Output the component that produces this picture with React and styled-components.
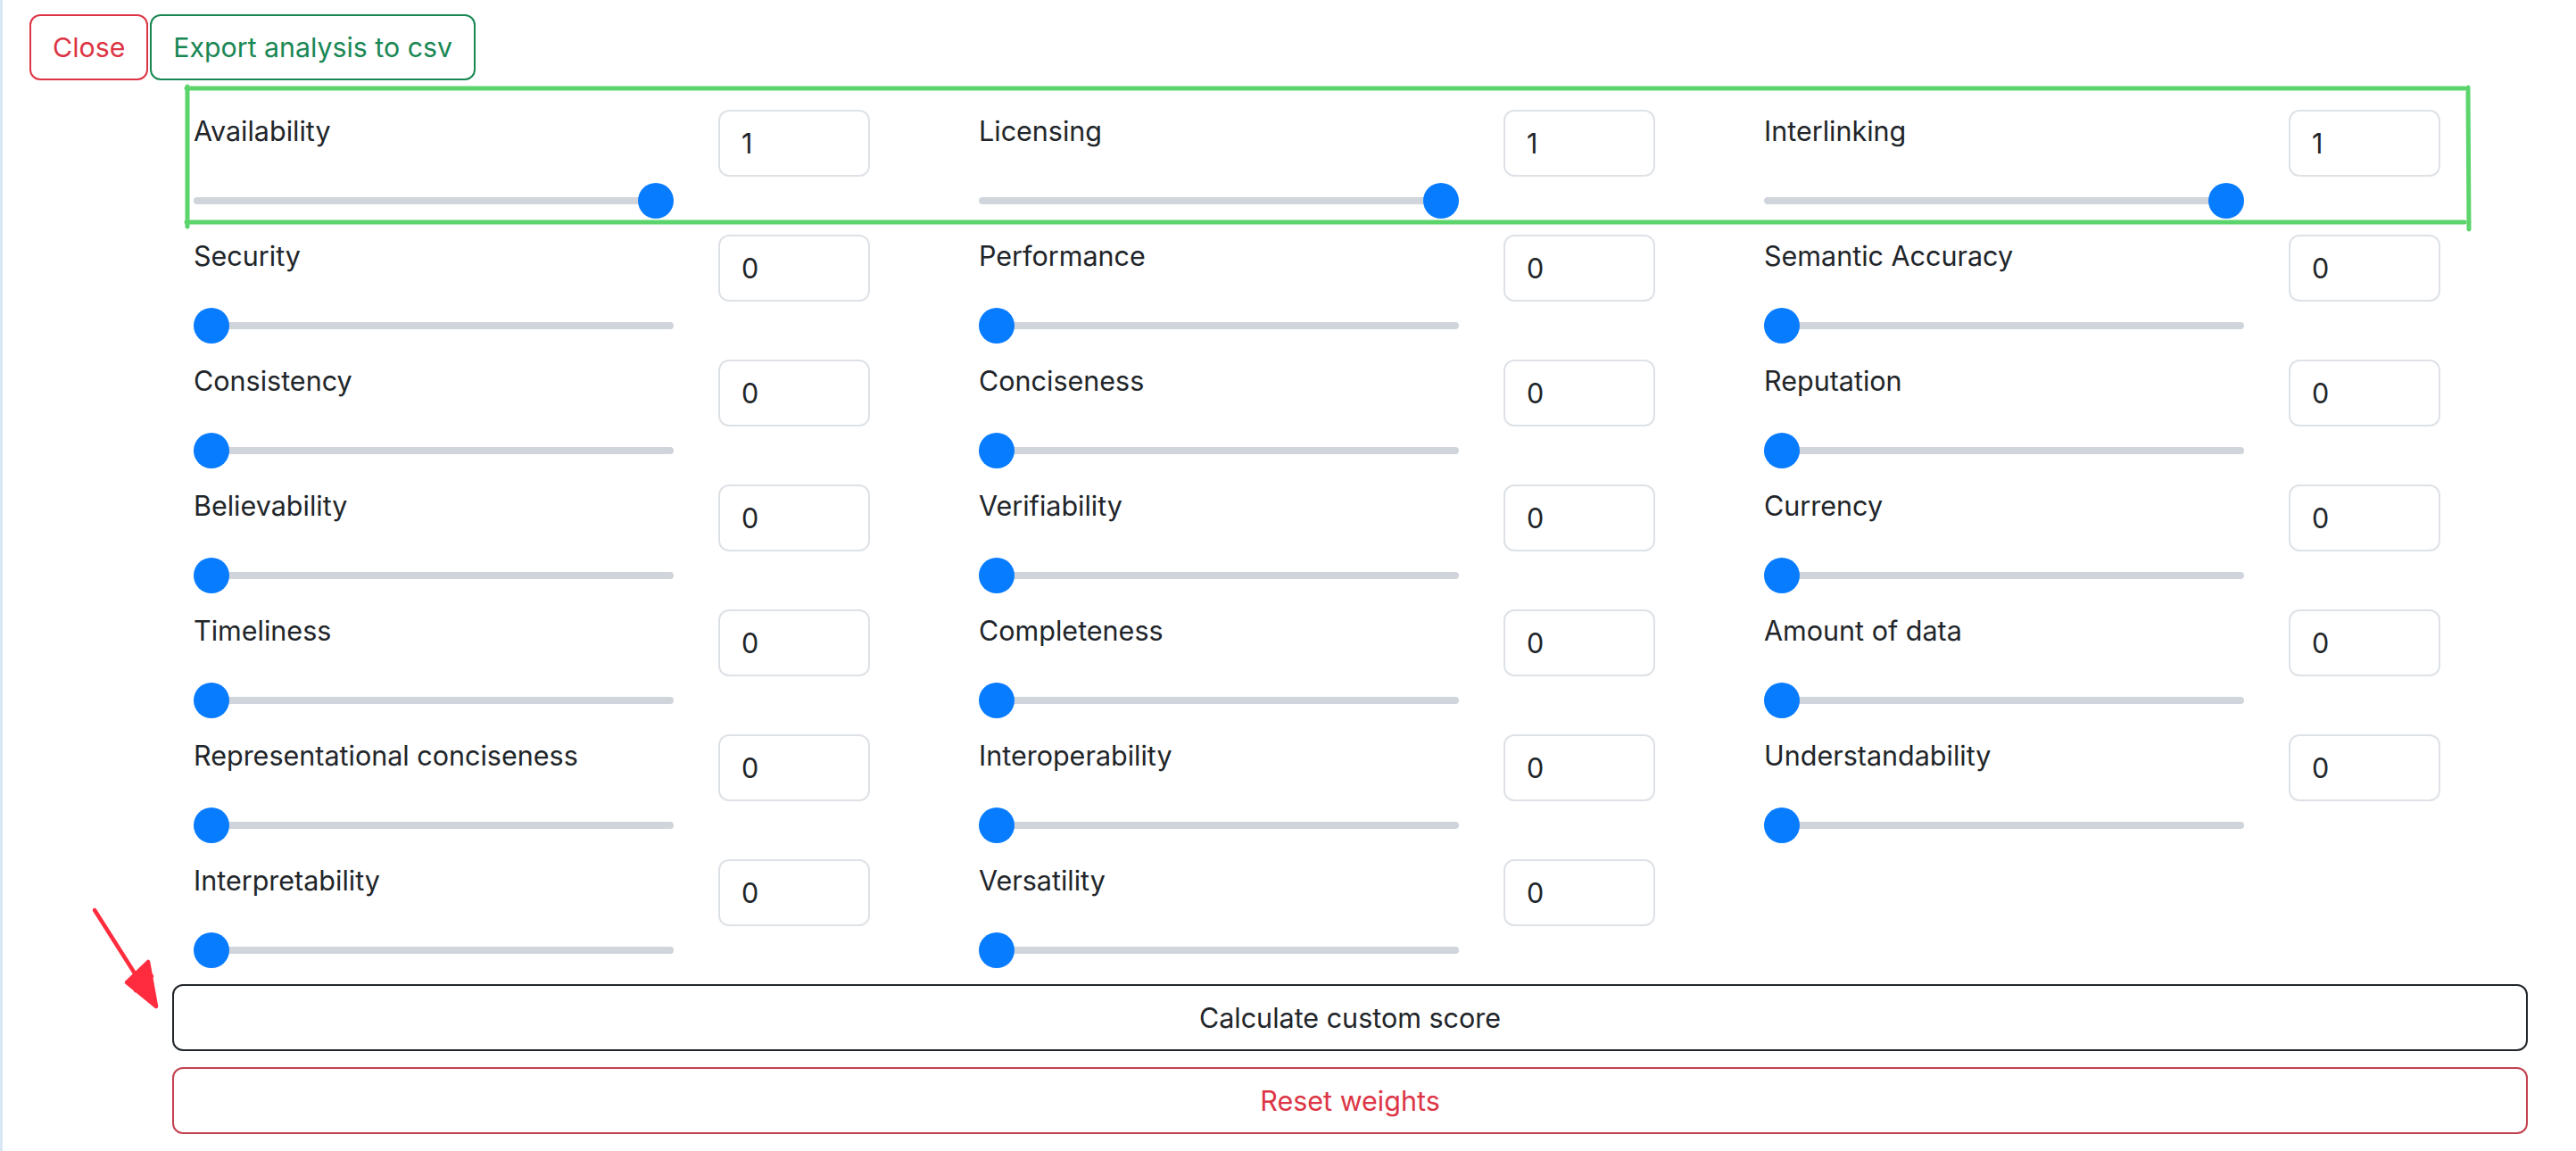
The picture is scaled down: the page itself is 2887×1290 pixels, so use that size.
import React, { useState } from "react";
import styled, { createGlobalStyle } from "styled-components";

const GlobalStyle = createGlobalStyle`
  * { box-sizing: border-box; }
  html, body {
    margin: 0;
    padding: 0;
    background: #fff;
  }
  body {
    font-family: Inter, "Liberation Sans", Arial, sans-serif;
    color: #212529;
  }
`;

const Root = styled.div`
  position: relative;
  width: 2887px;
  min-height: 1290px;
  overflow: hidden;
`;

const Page = styled.div`
  min-height: 1290px;
  border-left: 3px solid #d9e6f5;
  padding: 16px 0 0 30px;
`;

const Toolbar = styled.div`
  display: flex;
  gap: 2px;
`;

const OutlineButton = styled.button`
  height: 74px;
  padding: 0 24px;
  border: 2px solid ${({ $color }) => $color};
  border-radius: 12px;
  background: #fff;
  color: ${({ $color }) => $color};
  font-family: inherit;
  font-size: 30.3px;
  cursor: pointer;
`;

const Content = styled.div`
  width: 2640px;
  margin: 33px 0 0 160px;
`;

const Grid = styled.div`
  display: grid;
  grid-template-columns: repeat(3, 880px);
  grid-auto-rows: 140px;
`;

const Cell = styled.div`
  display: flex;
  align-items: flex-start;
  padding-left: 24px;
`;

const Control = styled.div`
  display: flex;
  flex-direction: column;
  width: 538px;
`;

const Label = styled.label`
  height: 50px;
  font-size: 30.5px;
  line-height: 48px;
  white-space: nowrap;
`;

const Range = styled.input.attrs({ type: "range" })`
  -webkit-appearance: none;
  appearance: none;
  width: 538px;
  height: 40px;
  margin: 32px 0 0;
  padding: 0;
  background: transparent;
  cursor: pointer;

  &::-webkit-slider-runnable-track {
    height: 8px;
    border-radius: 4px;
    background: #d0d5db;
  }

  &::-webkit-slider-thumb {
    -webkit-appearance: none;
    width: 40px;
    height: 40px;
    margin-top: -16px;
    border: none;
    border-radius: 50%;
    background: #087cff;
  }
`;

const ValueInput = styled.input`
  width: 170px;
  height: 75px;
  margin-left: 50px;
  padding: 0 24px;
  border: 2px solid #dee2e6;
  border-radius: 12px;
  font-family: inherit;
  font-size: 30.5px;
  color: #212529;
  outline: none;
`;

const WideButton = styled.button`
  display: block;
  width: 100%;
  height: 75px;
  border: 2px solid ${({ $border }) => $border};
  border-radius: 12px;
  background: #fff;
  color: ${({ $color }) => $color};
  font-family: inherit;
  font-size: 30.5px;
  cursor: pointer;

  & + & {
    margin-top: 18px;
  }
`;

const Overlay = styled.svg`
  position: absolute;
  top: 0;
  left: 0;
  pointer-events: none;
`;

const metrics = [
  ["Availability", 1],
  ["Licensing", 1],
  ["Interlinking", 1],
  ["Security", 0],
  ["Performance", 0],
  ["Semantic Accuracy", 0],
  ["Consistency", 0],
  ["Conciseness", 0],
  ["Reputation", 0],
  ["Believability", 0],
  ["Verifiability", 0],
  ["Currency", 0],
  ["Timeliness", 0],
  ["Completeness", 0],
  ["Amount of data", 0],
  ["Representational conciseness", 0],
  ["Interoperability", 0],
  ["Understandability", 0],
  ["Interpretability", 0],
  ["Versatility", 0],
];

const initialWeights = () =>
  Object.fromEntries(metrics.map(([name, value]) => [name, value]));

const App = () => {
  const [weights, setWeights] = useState(initialWeights);

  const setWeight = (name, value) => {
    const num = Math.min(1, Math.max(0, Number(value) || 0));
    setWeights((w) => ({ ...w, [name]: num }));
  };

  const resetWeights = () => {
    setWeights(Object.fromEntries(metrics.map(([name]) => [name, 0])));
  };

  return (
    <Root>
      <GlobalStyle />
      <Page>
        <Toolbar>
          <OutlineButton $color="#dc3545">Close</OutlineButton>
          <OutlineButton $color="#198754">Export analysis to csv</OutlineButton>
        </Toolbar>
        <Content>
          <Grid>
            {metrics.map(([name]) => (
              <Cell key={name}>
                <Control>
                  <Label>{name}</Label>
                  <Range
                    min="0"
                    max="1"
                    step="0.01"
                    value={weights[name]}
                    onChange={(e) => setWeight(name, e.target.value)}
                  />
                </Control>
                <ValueInput
                  type="text"
                  value={String(weights[name])}
                  onChange={(e) => setWeight(name, e.target.value)}
                />
              </Cell>
            ))}
          </Grid>
          <WideButton $border="#212529" $color="#212529">
            Calculate custom score
          </WideButton>
          <WideButton $border="#c2414f" $color="#dc3545" onClick={resetWeights}>
            Reset weights
          </WideButton>
        </Content>
      </Page>

      {/* hand-drawn annotations over the screenshot */}
      <Overlay width="2887" height="1290" viewBox="0 0 2887 1290">
        <g stroke="#5cd46c" strokeWidth="5" strokeLinecap="round" fill="none">
          <path d="M209 99 L2762 99" />
          <path d="M210 97 L210 254" />
          <path d="M209 249 L2762 249" />
          <path d="M2766 98 L2767 257" />
        </g>
        <g stroke="#fe2c3e" strokeWidth="4.5" strokeLinecap="round" strokeLinejoin="round">
          <path d="M106 1020 L172 1124" fill="none" />
          <path d="M166 1078 L175 1128 L142 1101 Z" fill="#fe2c3e" />
          <path d="M146 1098 L166 1086 M152 1110 L170 1094" fill="none" />
        </g>
      </Overlay>
    </Root>
  );
};

export default App;
